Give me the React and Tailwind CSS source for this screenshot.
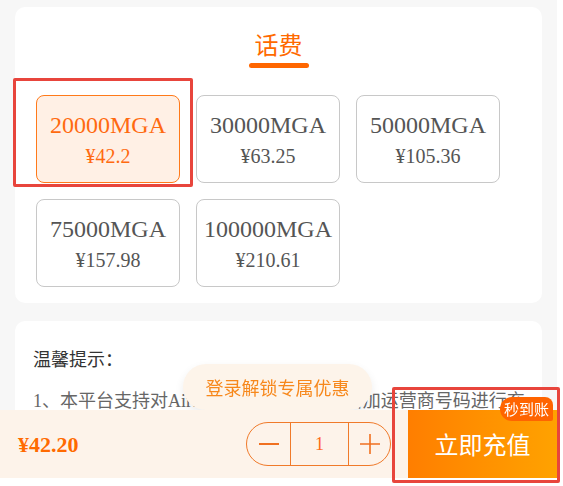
import React, { useState } from "react";

const plans = [
  { amount: "20000MGA", price: "¥42.2" },
  { amount: "30000MGA", price: "¥63.25" },
  { amount: "50000MGA", price: "¥105.36" },
  { amount: "75000MGA", price: "¥157.98" },
  { amount: "100000MGA", price: "¥210.61" },
];

const serif = { fontFamily: '"Liberation Serif", "Noto Sans CJK SC", serif' };
const sans = { fontFamily: '"Noto Sans CJK SC", sans-serif' };

export default function App() {
  const [selected, setSelected] = useState(0);
  const [count, setCount] = useState(1);

  return (
    <div className="h-[486px] overflow-hidden bg-white" style={serif}>
      <div className="w-[557px] h-[486px] bg-[#f7f7f7] px-[15px] pt-[7px]">
        {/* plans */}
        <section className="bg-white rounded-[10px] pt-[21px] pb-[16px]">
          <div className="flex flex-col items-center">
            <h1 className="text-[24px] leading-[32px] text-[#ff6a00] font-normal" style={sans}>
              话费
            </h1>
            <div className="mt-[3px] w-[60px] h-[5px] rounded-full bg-[#ff6600]" />
          </div>

          <div className="mt-[27px] pl-[21px] flex flex-wrap gap-4">
            {plans.map((p, i) => (
              <button
                key={p.amount}
                onClick={() => setSelected(i)}
                className={
                  i === selected
                    ? "w-[144px] h-[88px] rounded-[8px] border border-[#ff7a1a] bg-[#fff0e5] text-[#ff6a10] flex flex-col items-center justify-center gap-[3px]"
                    : "w-[144px] h-[88px] rounded-[8px] border border-[#c8c8c8] bg-white text-[#555555] flex flex-col items-center justify-center gap-[3px]"
                }
              >
                <span className="text-[24px] leading-[30px]">{p.amount}</span>
                <span className="text-[20px] leading-[26px]">{p.price}</span>
              </button>
            ))}
          </div>
        </section>

        {/* tips */}
        <section className="mt-[18px] bg-white rounded-[10px] pt-[25px] pl-[18px] pr-[6px] pb-[20px]">
          <p className="text-[18px] leading-[28px] text-[#333333]">温馨提示：</p>
          <p className="mt-[13px] text-[18px] leading-[28px] text-[#666666]">
            1、本平台支持对Airtel、Telma等马达加斯加运营商号码进行充值，充值成功后实时到账。
          </p>
        </section>
      </div>

      {/* login promo */}
      <div className="fixed left-[183px] top-[364px] w-[189px] h-[46px] rounded-full bg-[#fdf4ea] shadow-[0_4px_10px_rgba(0,0,0,0.08)] flex items-center justify-center">
        <span className="text-[18px] text-[#f7881c]" style={sans}>
          登录解锁专属优惠
        </span>
      </div>

      {/* bottom bar */}
      <div className="fixed inset-x-0 bottom-0 bg-white pb-[8px]">
        <div className="flex h-[68px] w-[557px]">
          <div className="flex-1 bg-[#fdf3ea] flex items-center pl-[18px] pr-[17px]">
            <span className="text-[22px] font-bold text-[#ff6a00]">¥{(42.2 * count).toFixed(2)}</span>
            <div className="ml-auto flex h-[44px] w-[145px] rounded-full border border-[#f07a2a] text-[#f07020]">
              <button
                onClick={() => setCount(Math.max(1, count - 1))}
                className="w-[43px] flex items-center justify-center"
              >
                <svg width="22" height="22" viewBox="0 0 22 22">
                  <path d="M1 11h20" stroke="#f07020" strokeWidth="2" />
                </svg>
              </button>
              <div className="w-[59px] border-x border-[#f07a2a] flex items-center justify-center text-[18px] text-[#ff6a1a]">
                {count}
              </div>
              <button onClick={() => setCount(count + 1)} className="flex-1 flex items-center justify-center">
                <svg width="22" height="22" viewBox="0 0 22 22">
                  <path d="M1 11h20M11 1v20" stroke="#f07020" strokeWidth="1.6" />
                </svg>
              </button>
            </div>
          </div>
          <button className="relative w-[149px] bg-gradient-to-r from-[#ff7e00] to-[#ffa200] flex items-center justify-center">
            <span className="text-[24px] text-white" style={sans}>
              立即充值
            </span>
            <span
              className="absolute -top-[13px] right-[4px] h-[24px] px-[4px] rounded-tl-[12px] rounded-bl-[12px] rounded-tr-[8px] rounded-br-[2px] bg-[#ff6400] text-white text-[15px] leading-[24px]"
              style={sans}
            >
              秒到账
            </span>
          </button>
        </div>
      </div>

      {/* highlight frames */}
      <div className="fixed left-[13px] top-[78px] w-[180px] h-[109px] border-[3px] border-[#e8453c] rounded-[2px] pointer-events-none" />
      <div className="fixed left-[392px] top-[387px] w-[168px] h-[96px] border-[3px] border-[#e8453c] rounded-[2px] pointer-events-none" />
    </div>
  );
}
